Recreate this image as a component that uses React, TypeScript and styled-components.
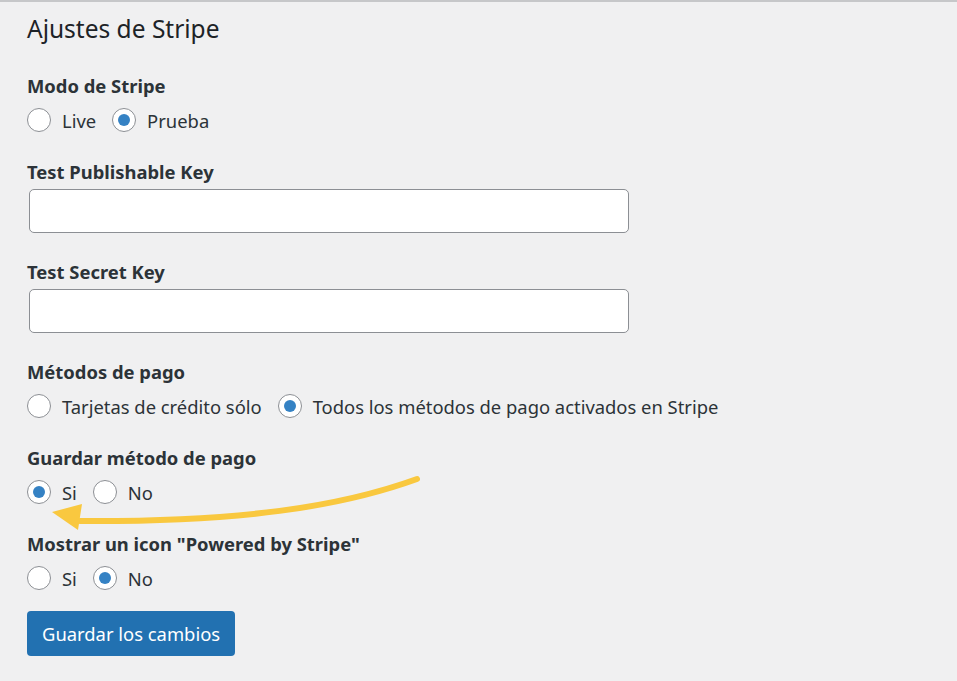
import React, { useState } from 'react';
import styled, { createGlobalStyle } from 'styled-components';

const GlobalStyle = createGlobalStyle`
  html, body {
    margin: 0;
    padding: 0;
    background: #f0f0f1;
  }
  body {
    font-family: "Noto Sans", "Open Sans", sans-serif;
    color: #1d2327;
  }
`;

const Page = styled.div`
  position: relative;
  min-height: 681px;
  box-sizing: border-box;
  border-top: 2px solid #c6c7c9;
  padding: 9px 27px 0;
`;

const Title = styled.h2`
  margin: 0 0 25px;
  font-size: 24.5px;
  line-height: 36px;
  font-weight: 400;
  color: #1d2327;
`;

const Form = styled.form`
  display: flex;
  flex-direction: column;
  gap: 24px;
`;

const Field = styled.div`
  display: flex;
  flex-direction: column;
`;

const FieldLabel = styled.div`
  font-size: 18.4px;
  line-height: 28px;
  font-weight: 700;
  color: #2c3338;
`;

const RadioRow = styled.div`
  display: flex;
  align-items: center;
  height: 28px;
  margin-top: 6px;
`;

const Option = styled.label`
  display: flex;
  align-items: center;
  gap: 11px;
  margin-right: 16px;
  font-size: 18.4px;
  color: #2c3338;
  cursor: pointer;
`;

const RadioDot = styled.span<{ $checked: boolean }>`
  width: 24px;
  height: 24px;
  box-sizing: border-box;
  border-radius: 50%;
  border: 1.5px solid #8c8f94;
  background: #fff;
  display: flex;
  align-items: center;
  justify-content: center;

  &::after {
    content: '';
    width: 12px;
    height: 12px;
    border-radius: 50%;
    background: #3582c4;
    display: ${(p) => (p.$checked ? 'block' : 'none')};
  }
`;

const TextInput = styled.input`
  width: 600px;
  height: 44px;
  box-sizing: border-box;
  margin: 3px 0 1px 2px;
  border: 1px solid #8c8f94;
  border-radius: 5px;
  background: #fff;
  font-size: 18px;
  padding: 0 10px;
  outline: none;
`;

const SaveButton = styled.button`
  align-self: flex-start;
  margin-top: -5px;
  height: 45px;
  padding: 0 15px;
  border: none;
  border-radius: 4px;
  background: #2271b1;
  color: #fff;
  font-family: inherit;
  font-size: 18.4px;
  cursor: pointer;
`;

const Arrow = styled.svg`
  position: absolute;
  left: 40px;
  top: 465px;
  pointer-events: none;
`;

type RadioGroupProps = {
  options: string[];
  value: string;
  onChange: (v: string) => void;
};

const RadioGroup = ({ options, value, onChange }: RadioGroupProps) => (
  <RadioRow>
    {options.map((o) => (
      <Option key={o} onClick={() => onChange(o)}>
        <RadioDot $checked={value === o} />
        {o}
      </Option>
    ))}
  </RadioRow>
);

export default function App() {
  const [mode, setMode] = useState('Prueba');
  const [methods, setMethods] = useState('Todos los métodos de pago activados en Stripe');
  const [save, setSave] = useState('Si');
  const [powered, setPowered] = useState('No');

  return (
    <>
      <GlobalStyle />
      <Page>
        <Title>Ajustes de Stripe</Title>
        <Form onSubmit={(e) => e.preventDefault()}>
          <Field>
            <FieldLabel>Modo de Stripe</FieldLabel>
            <RadioGroup options={['Live', 'Prueba']} value={mode} onChange={setMode} />
          </Field>
          <Field>
            <FieldLabel>Test Publishable Key</FieldLabel>
            <TextInput type="text" />
          </Field>
          <Field>
            <FieldLabel>Test Secret Key</FieldLabel>
            <TextInput type="text" />
          </Field>
          <Field>
            <FieldLabel>Métodos de pago</FieldLabel>
            <RadioGroup
              options={['Tarjetas de crédito sólo', 'Todos los métodos de pago activados en Stripe']}
              value={methods}
              onChange={setMethods}
            />
          </Field>
          <Field>
            <FieldLabel>Guardar método de pago</FieldLabel>
            <RadioGroup options={['Si', 'No']} value={save} onChange={setSave} />
          </Field>
          <Field>
            <FieldLabel>Mostrar un icon "Powered by Stripe"</FieldLabel>
            <RadioGroup options={['Si', 'No']} value={powered} onChange={setPowered} />
          </Field>
          <SaveButton type="submit">Guardar los cambios</SaveButton>
        </Form>
        <Arrow width="390" height="75" viewBox="0 0 390 75">
          <path
            d="M377 12 C 300 40, 200 55, 40 54"
            fill="none"
            stroke="#f9c83f"
            strokeWidth="6"
            strokeLinecap="round"
          />
          <polygon points="12,45 42,37 38,63" fill="#f9c83f" />
        </Arrow>
      </Page>
    </>
  );
}
